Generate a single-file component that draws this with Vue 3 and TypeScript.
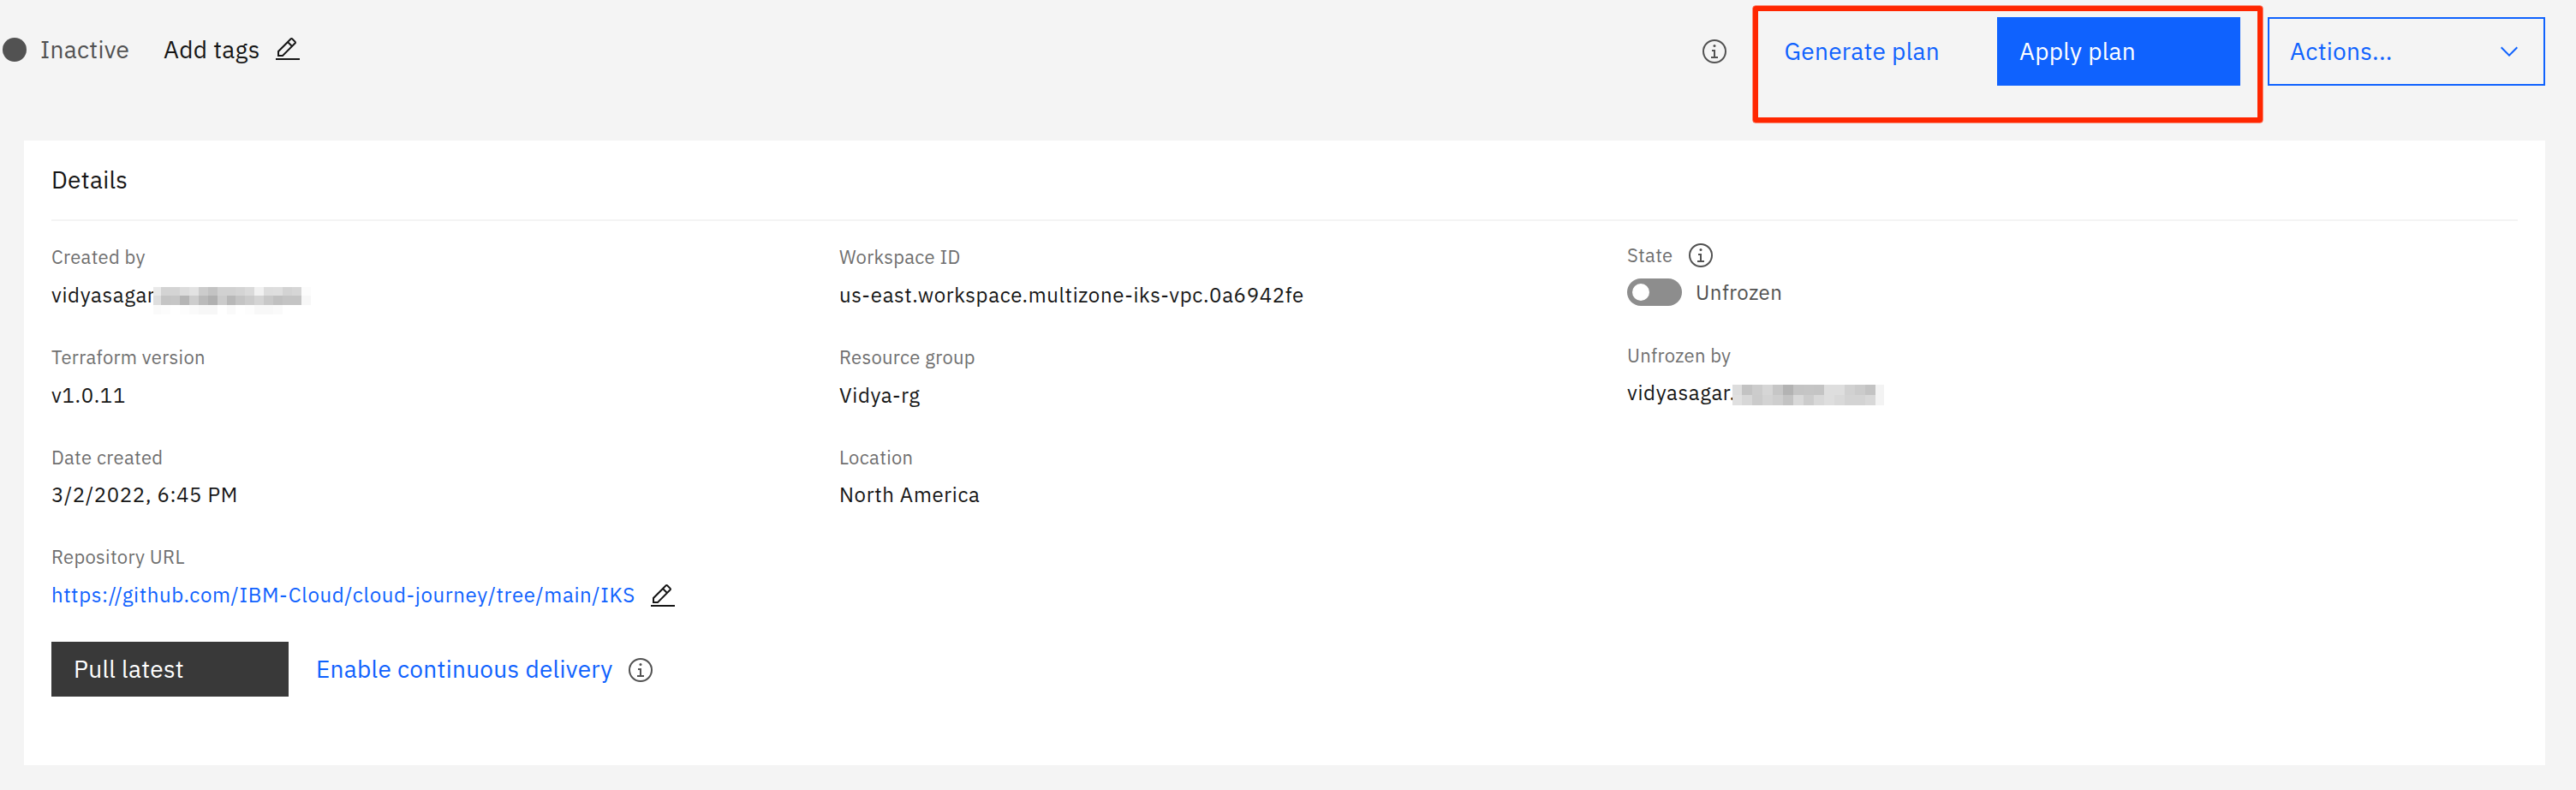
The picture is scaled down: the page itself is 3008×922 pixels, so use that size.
<script setup lang="ts">
import { h } from 'vue'

interface Mosaic {
  width: number
  height: number
  first: number
  cell: number
  count: number
  tail: number
  rows: { y: number; h: number; tones: string[] }[]
}

interface Field {
  label: string
  value: string
  link?: boolean
  mosaic?: Mosaic
}

const InfoIcon = () =>
  h('svg', { viewBox: '0 0 32 32', width: 32, height: 32, fill: '#525252' }, [
    h('path', { d: 'M17 22V14H13V16H15V22H12V24H20V22Z' }),
    h('path', { d: 'M16 8a1.5 1.5 0 1 0 1.5 1.5A1.5 1.5 0 0 0 16 8Z' }),
    h('path', { d: 'M16 30A14 14 0 1 1 30 16 14 14 0 0 1 16 30ZM16 4A12 12 0 1 0 28 16 12 12 0 0 0 16 4Z' }),
  ])

const EditIcon = () =>
  h('svg', { viewBox: '0 0 32 32', width: 32, height: 32, fill: '#161616' }, [
    h('path', {
      d: 'M2 26H30V28H2ZM25.4 9c.8-.8.8-2 0-2.8l-3.6-3.6c-.8-.8-2-.8-2.8 0l-15 15V24h6.4L25.4 9ZM20.4 4 24 7.6l-3 3L17.4 7 20.4 4ZM6 22v-3.6l10-10 3.6 3.6-10 10H6Z',
    }),
  ])

const tones = (s: string) => s.split(' ')

const creatorMask: Mosaic = {
  width: 185, height: 32, first: 9, cell: 10.93, count: 15, tail: 11,
  rows: [
    { y: 0, h: 10, tones: tones('e9 d3 d4 dc e2 cc c3 d1 d1 d4 da f1 dd de d3 d6 fc') },
    { y: 10, h: 11, tones: tones('de c4 c6 b5 cd ba b0 cb b8 c4 cb d4 c8 c0 c4 c4 f7') },
    { y: 21, h: 10.5, tones: tones('fa fc ff fd fa f7 f7 ff fa ff fd f8 f8 fa ff ff ff') },
  ],
}

const unfrozenMask: Mosaic = {
  width: 178, height: 24, first: 11, cell: 12, count: 13, tail: 10,
  rows: [
    { y: 0, h: 12, tones: tones('dd c3 cc d6 c6 b3 c4 c5 c4 de de d1 cb c3 f3') },
    { y: 12, h: 12, tones: tones('e0 d7 cb d3 ce c3 d9 cc d8 de d9 d3 d3 d8 f3') },
  ],
}

const cells = (m: Mosaic) =>
  m.rows.flatMap((row) =>
    row.tones.map((t, i) => ({
      x: i === 0 ? 0 : m.first + (i - 1) * m.cell,
      y: row.y,
      w: i === 0 ? m.first : i > m.count ? m.tail : m.cell,
      h: row.h,
      fill: `#${t}${t}${t}`,
    })),
  )

const primary: Field[] = [
  { label: 'Created by', value: 'vidyasagar', mosaic: creatorMask },
  { label: 'Terraform version', value: 'v1.0.11' },
  { label: 'Date created', value: '3/2/2022, 6:45 PM' },
  { label: 'Repository URL', value: 'https://github.com/IBM-Cloud/cloud-journey/tree/main/IKS', link: true },
]

const secondary: Field[] = [
  { label: 'Workspace ID', value: 'us-east.workspace.multizone-iks-vpc.0a6942fe' },
  { label: 'Resource group', value: 'Vidya-rg' },
  { label: 'Location', value: 'North America' },
]
</script>

<template>
  <div class="page">
    <header class="bar">
      <div class="status">
        <span class="dot"></span>
        <span class="inactive">Inactive</span>
        <span class="tags">Add tags</span>
        <EditIcon class="tag-edit" />
      </div>
      <div class="actions">
        <InfoIcon class="bar-info" />
        <button class="btn ghost">Generate plan</button>
        <button class="btn solid">Apply plan</button>
        <button class="btn outline">
          <span>Actions...</span>
          <svg viewBox="0 0 16 16" width="32" height="32"><path fill="#0f62fe" d="M8 11 3 6 3.7 5.3 8 9.6 12.3 5.3 13 6Z" /></svg>
        </button>
        <div class="highlight"></div>
      </div>
    </header>

    <section class="card">
      <h2 class="title">Details</h2>
      <div class="columns">
        <div class="column">
          <div v-for="f in primary" :key="f.label" class="field">
            <div class="label">{{ f.label }}</div>
            <div class="line">
              <a v-if="f.link" class="value link">{{ f.value }}</a>
              <span v-else class="value" :class="{ masked: f.mosaic }">{{ f.value }}</span>
              <EditIcon v-if="f.link" class="url-edit" />
              <svg v-if="f.mosaic" class="mask" :width="f.mosaic.width" :height="f.mosaic.height" shape-rendering="crispEdges">
                <rect v-for="(c, i) in cells(f.mosaic)" :key="i" :x="c.x" :y="c.y" :width="c.w" :height="c.h" :fill="c.fill" />
              </svg>
            </div>
          </div>
        </div>

        <div class="column">
          <div v-for="f in secondary" :key="f.label" class="field">
            <div class="label">{{ f.label }}</div>
            <div class="line"><span class="value">{{ f.value }}</span></div>
          </div>
        </div>

        <div class="column state">
          <div class="field">
            <div class="label state-label"><span>State</span><InfoIcon /></div>
            <div class="switch">
              <span class="toggle"><span class="knob"></span></span>
              <span class="value switch-text">Unfrozen</span>
            </div>
          </div>
          <div class="field">
            <div class="label">Unfrozen by</div>
            <div class="line unfrozen-line">
              <span class="value masked-state">vidyasagar.</span>
              <svg class="mask" :width="unfrozenMask.width" :height="unfrozenMask.height" shape-rendering="crispEdges">
                <rect v-for="(c, i) in cells(unfrozenMask)" :key="i" :x="c.x" :y="c.y" :width="c.w" :height="c.h" :fill="c.fill" />
              </svg>
            </div>
          </div>
        </div>
      </div>

      <div class="footer">
        <button class="pull">Pull latest</button>
        <a class="delivery">Enable continuous delivery</a>
        <InfoIcon class="delivery-info" />
      </div>
    </section>
  </div>
</template>

<style>
html,
body {
  margin: 0;
  background: #f4f4f4;
}
</style>

<style scoped>
.page {
  box-sizing: border-box;
  width: 3008px;
  height: 922px;
  background: #f4f4f4;
  color: #161616;
  font-family: 'IBM Plex Sans', Roboto, 'Liberation Sans', sans-serif;
  font-size: 28px;
  letter-spacing: 0.3px;
  white-space: nowrap;
  overflow: hidden;
}
svg {
  display: block;
  flex: none;
}
button {
  margin: 0;
  padding: 0;
  border: 0;
  border-radius: 0;
  box-sizing: border-box;
  font: inherit;
  letter-spacing: inherit;
  text-align: left;
}
.bar {
  display: flex;
  justify-content: space-between;
  height: 164px;
}
.status {
  display: flex;
  align-items: center;
  height: 40px;
  padding: 38px 0 0 3px;
  line-height: 40px;
}
.dot {
  width: 28px;
  height: 28px;
  border-radius: 50%;
  background: #525252;
}
.inactive {
  width: 144px;
  margin-left: 16px;
  color: #525252;
}
.tags {
  width: 129px;
}
.actions {
  position: relative;
  display: flex;
  height: 80px;
  padding: 20px 36px 0 0;
}
.bar-info {
  margin: 24px 40px 0 0;
}
.btn {
  height: 80px;
  line-height: 80px;
}
.ghost {
  width: 274px;
  padding-left: 25.5px;
  background: none;
  color: #0f62fe;
}
.solid {
  width: 284px;
  padding-left: 26px;
  background: #0f62fe;
  color: #fff;
}
.outline {
  display: flex;
  justify-content: space-between;
  width: 324px;
  margin-left: 32px;
  padding: 0 24px;
  border: 2px solid #0f62fe;
  background: none;
  color: #0f62fe;
  line-height: 76px;
}
.outline svg {
  margin-top: 22px;
}
/* Frame drawn over the plan buttons */
.highlight {
  position: absolute;
  top: 7px;
  right: 366px;
  box-sizing: border-box;
  width: 595px;
  height: 136px;
  border: 6px solid #ff2600;
  border-radius: 3px;
  box-shadow: 0 0 0 0.5px #ff2600;
}
.card {
  box-sizing: border-box;
  width: 2944px;
  height: 729px;
  margin-left: 28px;
  padding: 0 32px;
  background: #fff;
}
.title {
  height: 92px;
  margin: 0;
  border-bottom: 2px solid #f4f4f4;
  font-size: 28px;
  font-weight: 400;
  line-height: 92px;
}
.columns {
  display: grid;
  grid-template-columns: 920px 920px 1fr;
  height: 464px;
  padding-top: 27px;
}
.column {
  display: grid;
  grid-template-rows: 117px 117px 116px 114px;
}
.label {
  height: 30px;
  color: #6f6f6f;
  font-size: 22px;
  line-height: 30px;
}
.line {
  display: flex;
  height: 32px;
  margin-top: 13px;
}
.field:nth-child(3) .line,
.unfrozen-line {
  margin-top: 12px;
}
.value {
  font-size: 24px;
  line-height: 32px;
  letter-spacing: 0.64px;
}
.link {
  width: 698px;
  color: #0f62fe;
}
.masked {
  width: 119px;
}
.mask {
  margin-top: 7px;
  background: #fff;
}
.url-edit {
  margin-top: 2px;
}
.state {
  margin-top: -2px;
}
.state-label {
  display: flex;
  align-items: center;
}
.state-label span {
  width: 70px;
}
.switch {
  display: flex;
  align-items: center;
  height: 32px;
  margin-top: 12px;
}
.toggle {
  box-sizing: border-box;
  width: 64px;
  height: 32px;
  padding: 6px;
  border-radius: 16px;
  background: #8d8d8d;
}
.knob {
  display: block;
  width: 20px;
  height: 20px;
  border-radius: 50%;
  background: #fff;
}
.switch-text {
  margin-left: 16px;
  color: #525252;
  letter-spacing: 0.5px;
}
.masked-state {
  width: 123px;
}
.footer {
  display: flex;
  height: 64px;
}
.pull {
  width: 277px;
  padding-left: 26px;
  background: #393939;
  color: #fff;
  line-height: 64px;
}
.delivery {
  width: 363px;
  margin-left: 32px;
  color: #0f62fe;
  line-height: 64px;
}
.delivery-info {
  margin-top: 17px;
}
</style>
